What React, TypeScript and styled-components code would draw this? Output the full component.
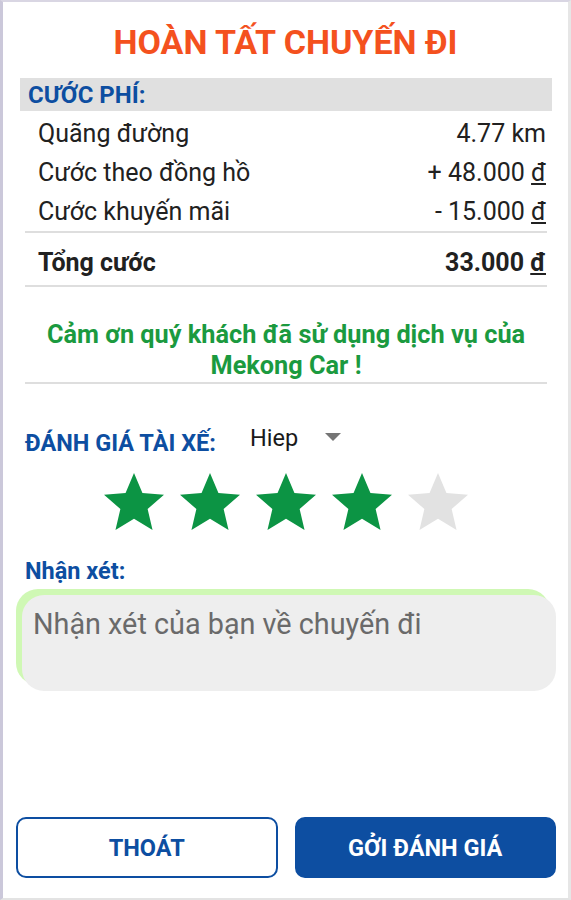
import React from "react";
import styled, { createGlobalStyle } from "styled-components";

const GlobalStyle = createGlobalStyle`
  html, body {
    margin: 0;
    padding: 0;
    background: #ffffff;
  }
  * {
    box-sizing: border-box;
  }
`;

const Screen = styled.div`
  width: 571px;
  height: 900px;
  display: flex;
  flex-direction: column;
  background: #ffffff;
  border-top: 2px solid #d9d6e3;
  border-left: 3px solid #cbc8da;
  border-right: 3px solid #e6e6e6;
  border-bottom: 2px solid #e3e3e3;
  font-family: Roboto, "Noto Sans", sans-serif;
`;

const Title = styled.h1`
  margin: 20px 0 0 0;
  font-size: 34px;
  line-height: 40px;
  font-weight: 700;
  text-align: center;
  color: #f4511e;
`;

const SectionBar = styled.div`
  margin: 16px 16px 0 17px;
  height: 33px;
  padding-left: 8px;
  display: flex;
  align-items: center;
  background: #e0e0e0;
  color: #0d4ea1;
  font-size: 24px;
  font-weight: 700;
`;

const FareList = styled.div`
  display: flex;
  flex-direction: column;
  margin: 3px 21px 0 22px;
`;

const FareRow = styled.div<{ $total?: boolean }>`
  display: flex;
  justify-content: space-between;
  align-items: center;
  height: ${(p) => (p.$total ? "38px" : "39px")};
  margin-top: ${(p) => (p.$total ? "10px" : "0")};
  margin-bottom: ${(p) => (p.$total ? "4px" : "0")};
  padding: 0 1px 0 13px;
  font-size: 25px;
  font-weight: ${(p) => (p.$total ? 700 : 400)};
  color: #212121;
`;

const Divider = styled.div`
  height: 2px;
  background: #dedede;
`;

const Currency = styled.span`
  text-decoration: underline;
  text-underline-offset: 2px;
`;

const ThanksBlock = styled.div`
  display: flex;
  flex-direction: column;
  margin: 32px 21px 0 22px;
`;

const ThanksText = styled.p`
  margin: 0 0 1px 0;
  padding: 0 8px;
  text-align: center;
  font-size: 25.3px;
  line-height: 31px;
  font-weight: 700;
  color: #1b9a3f;
`;

const RatingRow = styled.div`
  display: flex;
  align-items: flex-start;
  margin: 40px 0 0 22px;
`;

const Label = styled.div`
  font-size: 23.5px;
  line-height: 28px;
  font-weight: 700;
  color: #0d4ea1;
`;

const DriverLabel = styled(Label)`
  margin-top: 5px;
  width: 225px;
`;

const DriverSelect = styled.div`
  display: flex;
  align-items: center;
  gap: 27px;
  font-size: 23.5px;
  line-height: 28px;
  color: #1a1a1a;
`;

const Caret = styled.span`
  width: 0;
  height: 0;
  margin-top: -2px;
  border-left: 8px solid transparent;
  border-right: 8px solid transparent;
  border-top: 8px solid #757575;
`;

const Stars = styled.div`
  display: flex;
  justify-content: center;
  gap: 16px;
  margin-top: 16px;
`;

const StarIcon = styled.svg<{ $on: boolean }>`
  width: 60px;
  height: 57px;
  fill: ${(p) => (p.$on ? "#0c9444" : "#e2e2e2")};
`;

const CommentLabel = styled(Label)`
  margin: 27px 0 0 22px;
`;

const CommentBox = styled.textarea`
  margin: 10px 12px 0 19px;
  height: 96px;
  padding: 13px 11px;
  border: none;
  outline: none;
  resize: none;
  border-radius: 22px;
  background: #eeeeee;
  box-shadow: -6px -6px 0 0 #cff8b4;
  font-family: Roboto, "Noto Sans", sans-serif;
  font-size: 28.8px;
  line-height: 32px;
  color: #333333;
  &::placeholder {
    color: #6a6a6a;
  }
`;

const Spacer = styled.div`
  flex: 1;
`;

const ButtonRow = styled.div`
  display: grid;
  grid-template-columns: 1fr 1fr;
  gap: 17px;
  margin: 0 12px 20px 13px;
`;

const ActionButton = styled.button<{ $primary?: boolean }>`
  height: 61px;
  border-radius: 10px;
  border: 2px solid #0d4ea1;
  background: ${(p) => (p.$primary ? "#0d4ea1" : "#ffffff")};
  color: ${(p) => (p.$primary ? "#ffffff" : "#0d4ea1")};
  font-family: Roboto, "Noto Sans", sans-serif;
  font-size: 23.5px;
  font-weight: 700;
  cursor: pointer;
`;

const Star = ({ on }: { on: boolean }) => (
  <StarIcon $on={on} viewBox="2 2 20 19">
    <path d="M12 17.27L18.18 21l-1.64-7.03L22 9.24l-7.19-.61L12 2 9.19 8.63 2 9.24l5.46 4.73L5.82 21z" />
  </StarIcon>
);

const fares = [
  { label: "Quãng đường", value: "4.77 km", unit: "" },
  { label: "Cước theo đồng hồ", value: "+ 48.000 ", unit: "đ" },
  { label: "Cước khuyến mãi", value: "- 15.000 ", unit: "đ" },
];

const App = () => {
  const rating = 4;
  return (
    <>
      <GlobalStyle />
      <Screen>
        <Title>HOÀN TẤT CHUYẾN ĐI</Title>
        <SectionBar>CƯỚC PHÍ:</SectionBar>
        <FareList>
          {fares.map((f) => (
            <FareRow key={f.label}>
              <span>{f.label}</span>
              <span>
                {f.value}
                {f.unit && <Currency>{f.unit}</Currency>}
              </span>
            </FareRow>
          ))}
          <Divider />
          <FareRow $total>
            <span>Tổng cước</span>
            <span>
              33.000 <Currency>đ</Currency>
            </span>
          </FareRow>
          <Divider />
        </FareList>
        <ThanksBlock>
          <ThanksText>Cảm ơn quý khách đã sử dụng dịch vụ của Mekong Car !</ThanksText>
          <Divider />
        </ThanksBlock>
        <RatingRow>
          <DriverLabel>ĐÁNH GIÁ TÀI XẾ:</DriverLabel>
          <DriverSelect>
            Hiep
            <Caret />
          </DriverSelect>
        </RatingRow>
        <Stars>
          {[1, 2, 3, 4, 5].map((i) => (
            <Star key={i} on={i <= rating} />
          ))}
        </Stars>
        <CommentLabel>Nhận xét:</CommentLabel>
        <CommentBox placeholder="Nhận xét của bạn về chuyến đi" />
        <Spacer />
        <ButtonRow>
          <ActionButton>THOÁT</ActionButton>
          <ActionButton $primary>GỞI ĐÁNH GIÁ</ActionButton>
        </ButtonRow>
      </Screen>
    </>
  );
};

export default App;
